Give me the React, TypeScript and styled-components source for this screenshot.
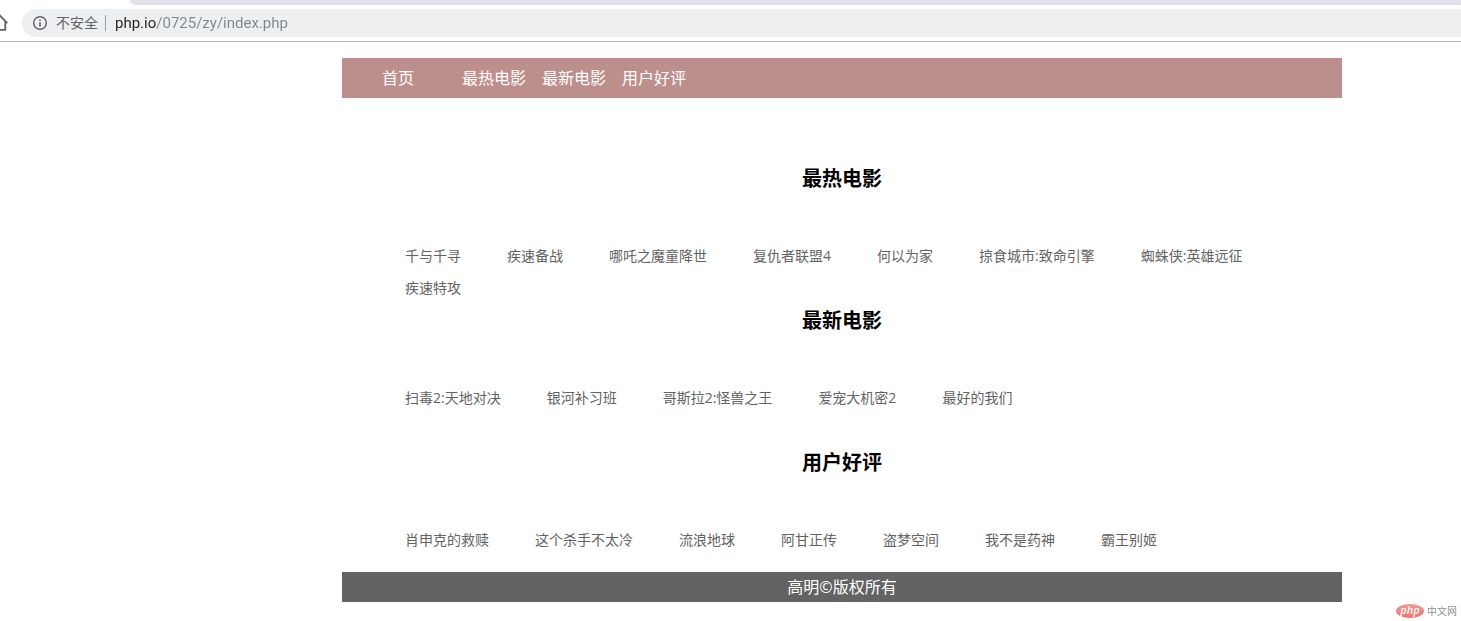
import React from "react";
import styled, { createGlobalStyle } from "styled-components";

const GlobalStyle = createGlobalStyle`
  * {
    box-sizing: border-box;
  }

  body {
    margin: 0;
    background: #fff;
    font-family: "Open Sans", "Noto Sans CJK SC", sans-serif;
    font-size: 16px;
  }
`;

const BrowserBar = styled.header`
  border-bottom: 1px solid #b5b5b5;
`;

const TabStrip = styled.div`
  height: 5px;
  margin-left: 130px;
  border-bottom-left-radius: 6px;
  background: #dee1e6;
`;

const Toolbar = styled.div`
  display: flex;
  align-items: center;
  padding: 4px 0;
`;

const HomeButton = styled.button`
  display: flex;
  width: 22px;
  height: 28px;
  padding: 0;
  border: 0;
  background: none;
`;

const Omnibox = styled.div`
  display: flex;
  flex: 1;
  align-items: center;
  height: 28px;
  padding-left: 10px;
  border-radius: 14px 0 0 14px;
  background: #eeeff1;
  color: #5f6368;
  font-size: 14px;
`;

const SecurityLabel = styled.label`
  margin-left: 8px;
  padding-right: 7px;
  border-right: 1px solid #9a9da1;
  line-height: 16px;
`;

const Address = styled.input`
  flex: 1;
  margin: 0 0 0 9px;
  padding: 0;
  border: 0;
  outline: 0;
  background: linear-gradient(90deg, #202124 42px, #80868b 42px);
  background-clip: text;
  color: transparent;
  font-family: Roboto, sans-serif;
  font-size: 15px;
  line-height: 20px;
`;

const Page = styled.div`
  padding: 16px 0 0 223px;
`;

const Content = styled.div`
  max-width: 1000px;
  margin: 0 auto;
`;

const Nav = styled.nav`
  display: flex;
  padding-left: 40px;
  background: #bc8f8d;
`;

const NavLink = styled.a`
  width: 80px;
  color: #fff;
  line-height: 40px;
  text-decoration: none;
`;

const Main = styled.main`
  padding-top: 64px;
`;

const Section = styled.section`
  min-height: 142px;

  &:last-child {
    min-height: 126px;
  }
`;

const Title = styled.h2`
  margin: 0 0 44px;
  color: #000;
  font-size: 20px;
  line-height: 34px;
  text-align: center;
`;

const MovieList = styled.ul`
  display: flex;
  flex-wrap: wrap;
  column-gap: 46px;
  margin: 0;
  padding: 0 23px 0 63px;
  list-style: none;
`;

const MovieLink = styled.a`
  display: block;
  color: #636363;
  font-size: 14px;
  line-height: 32px;
  text-decoration: none;
`;

const Footer = styled.footer`
  background: #636363;
  color: #fff;
  line-height: 30px;
  text-align: center;
`;

const Watermark = styled.a`
  position: fixed;
  right: 4px;
  bottom: 2px;
  display: flex;
  align-items: center;
  gap: 3px;
  color: #8c8c8c;
  font-size: 10px;
  line-height: 16px;
  text-decoration: none;
`;

const LogoBadge = styled.span`
  width: 28px;
  height: 14px;
  border-radius: 50%;
  background: linear-gradient(#f29a94, #ea7570);
  color: #fff;
  font-size: 11px;
  font-style: italic;
  font-weight: 600;
  line-height: 12px;
  text-align: center;
`;

const categories = [
  {
    title: "最热电影",
    movies: [
      "千与千寻",
      "疾速备战",
      "哪吒之魔童降世",
      "复仇者联盟4",
      "何以为家",
      "掠食城市:致命引擎",
      "蜘蛛侠:英雄远征",
      "疾速特攻",
    ],
  },
  {
    title: "最新电影",
    movies: ["扫毒2:天地对决", "银河补习班", "哥斯拉2:怪兽之王", "爱宠大机密2", "最好的我们"],
  },
  {
    title: "用户好评",
    movies: [
      "肖申克的救赎",
      "这个杀手不太冷",
      "流浪地球",
      "阿甘正传",
      "盗梦空间",
      "我不是药神",
      "霸王别姬",
    ],
  },
];

function HomeIcon() {
  return (
    <svg width="22" height="28" viewBox="0 0 22 28" fill="none" stroke="#5f6368" strokeWidth="1.8">
      <path d="M-11 14 L-2 4.5 L7.3 14.2 M5.3 12.5 V20.8 H-9.3 V12.5" />
    </svg>
  );
}

function InfoIcon() {
  return (
    <svg width="16" height="16" viewBox="0 0 16 16" fill="none" stroke="#5f6368">
      <circle cx="8" cy="8" r="6.3" strokeWidth="1.4" />
      <path d="M8 7.2V11.5M8 4.5V6" strokeWidth="1.6" />
    </svg>
  );
}

export default function App() {
  return (
    <>
      <GlobalStyle />
      <BrowserBar>
        <TabStrip />
        <Toolbar>
          <HomeButton aria-label="主页">
            <HomeIcon />
          </HomeButton>
          <Omnibox>
            <InfoIcon />
            <SecurityLabel htmlFor="address">不安全</SecurityLabel>
            <Address id="address" type="text" defaultValue="php.io/0725/zy/index.php" />
          </Omnibox>
        </Toolbar>
      </BrowserBar>
      <Page>
        <Content>
          <Nav>
            <NavLink href="#">首页</NavLink>
            {categories.map(({ title }) => (
              <NavLink key={title} href={`#${title}`}>
                {title}
              </NavLink>
            ))}
          </Nav>
          <Main>
            {categories.map(({ title, movies }) => (
              <Section key={title} id={title}>
                <Title>{title}</Title>
                <MovieList>
                  {movies.map((movie) => (
                    <li key={movie}>
                      <MovieLink href="#">{movie}</MovieLink>
                    </li>
                  ))}
                </MovieList>
              </Section>
            ))}
          </Main>
          <Footer>高明©版权所有</Footer>
        </Content>
      </Page>
      <Watermark href="#">
        <LogoBadge>php</LogoBadge>
        中文网
      </Watermark>
    </>
  );
}
